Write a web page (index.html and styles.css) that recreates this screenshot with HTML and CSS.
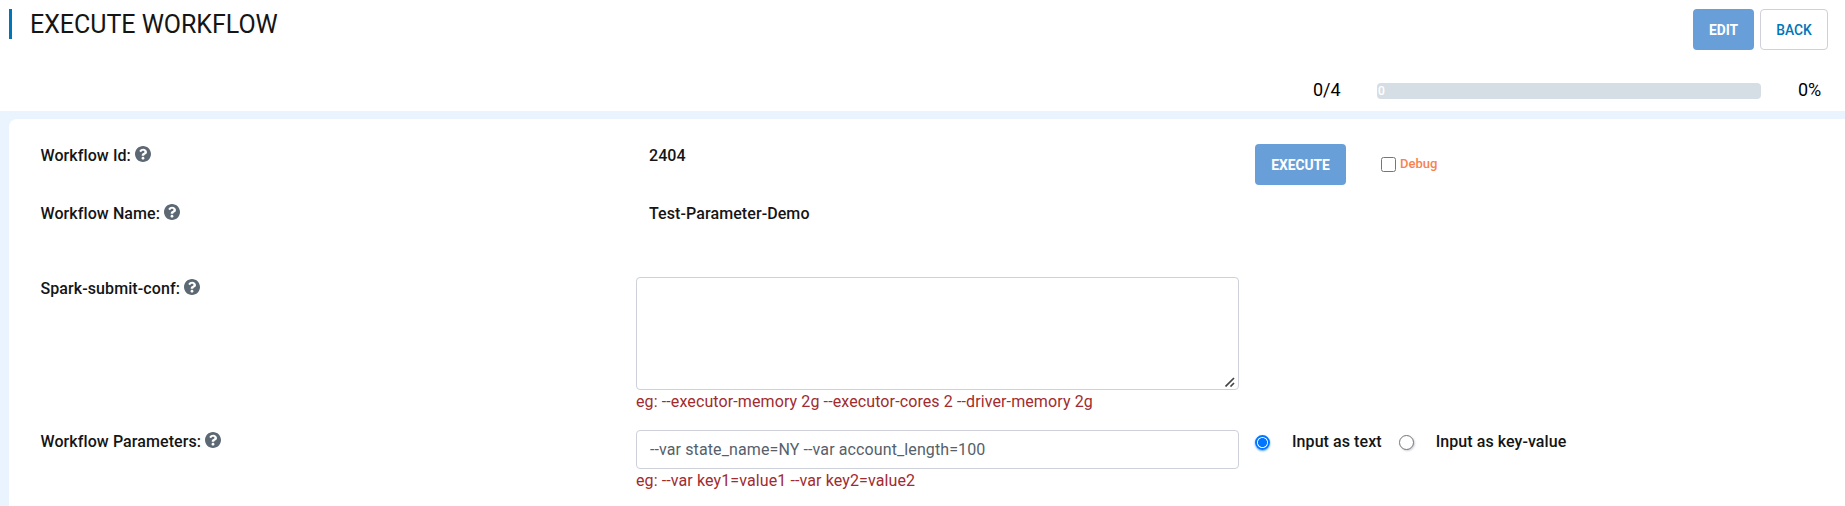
FILE: index.html
```
<!DOCTYPE html>
<html lang="en">
<head>
<meta charset="utf-8">
<title>Execute Workflow</title>
<link rel="stylesheet" href="styles.css">
</head>
<body>
<svg class="sprite" width="0" height="0" aria-hidden="true">
  <symbol id="help" viewBox="8 8 496 496"><path d="M504 256c0 137-111 248-248 248S8 393 8 256 119 8 256 8s248 111 248 248zM262.700 90c-54.500 0-89.300 23-116.500 63.800-3.500 5.300-2.400 12.400 2.700 16.300l34.700 26.300c5.200 3.900 12.600 3 16.700-2.100 17.900-22.700 30.100-35.800 57.300-35.800 20.400 0 45.700 13.100 45.700 33 0 15-12.400 22.700-32.500 34C247.100 238.500 216 254.900 216 296v4c0 6.600 5.400 12 12 12h56c6.600 0 12-5.400 12-12v-1.300c0-28.500 83.200-29.600 83.200-106.700 0-58-60.200-102-116.500-102zM256 338c-25.400 0-46 20.600-46 46s20.600 46 46 46 46-20.600 46-46-20.600-46-46-46z"/></symbol>
</svg>
<header class="header">
  <div class="title-row">
    <h1 class="title">EXECUTE WORKFLOW</h1>
    <div class="actions">
      <button class="btn btn-primary btn-edit">EDIT</button>
      <button class="btn btn-outline">BACK</button>
    </div>
  </div>
  <div class="progress-row">
    <span class="count">0/4</span>
    <div class="progress"><span class="progress-value">0</span></div>
    <span class="percent">0%</span>
  </div>
</header>
<main class="main">
  <form class="card">
    <div class="row row-id">
      <div class="label">Workflow Id: <svg class="help"><use href="#help"/></svg></div>
      <div class="value">2404</div>
      <div class="side">
        <button type="button" class="btn btn-primary btn-execute">EXECUTE</button>
        <label class="debug"><input class="checkbox" type="checkbox">Debug</label>
      </div>
    </div>
    <div class="row row-name">
      <div class="label">Workflow Name: <svg class="help"><use href="#help"/></svg></div>
      <div class="value">Test-Parameter-Demo</div>
    </div>
    <div class="row row-conf">
      <div class="label">Spark-submit-conf: <svg class="help"><use href="#help"/></svg></div>
      <div class="field">
        <textarea class="control area"></textarea>
        <svg class="grip" viewBox="0 0 10 10"><path d="M.5 9.500L9 1M5.500 9.500L9 6"/></svg>
        <div class="hint">eg: --executor-memory 2g --executor-cores 2 --driver-memory 2g</div>
      </div>
    </div>
    <div class="row row-params">
      <div class="label">Workflow Parameters: <svg class="help"><use href="#help"/></svg></div>
      <div class="field">
        <input class="control text" type="text" value="--var state_name=NY --var account_length=100">
        <div class="hint">eg: --var key1=value1 --var key2=value2</div>
      </div>
      <div class="side radios">
        <label class="option"><input class="radio" type="radio" name="mode" checked>Input as text</label>
        <label class="option"><input class="radio" type="radio" name="mode">Input as key-value</label>
      </div>
    </div>
  </form>
</main>
</body>
</html>
```
FILE: styles.css
```
* { box-sizing: border-box; }
body {
  margin: 0;
  height: 506px;
  overflow: hidden;
  display: flex;
  flex-direction: column;
  background: #fff;
  color: #151515;
  font: 400 16px/24px Roboto, sans-serif;
}
.sprite { position: absolute; }
.header { height: 111px; flex: none; padding: 9px 17px 0 9px; }
.title-row { display: flex; justify-content: space-between; align-items: flex-start; height: 69px; }
.title {
  margin: 0;
  height: 30px;
  padding-left: 18px;
  border-left: 3px solid #0076b8;
  font-size: 25px;
  line-height: 32px;
  font-weight: 400;
  letter-spacing: -.03px;
}
.actions { display: flex; gap: 6px; }
.btn {
  height: 41px;
  padding: 0;
  border: 1px solid transparent;
  border-radius: 4px;
  font: 500 13.800px/20px Roboto, sans-serif;
}
.btn-primary { background: #689fd9; color: #fff; font-weight: 700; }
.btn-edit { width: 61px; }
.btn-outline { width: 68px; background: #fff; border-color: #ced0da; color: #0076b8; }
.btn-execute { width: 91px; }
.progress-row { display: flex; align-items: center; height: 24px; font-size: 18px; color: #000; }
.count { margin-left: 1304px; width: 64px; }
.progress {
  width: 384px;
  height: 16px;
  margin-top: 2px;
  border-radius: 4px;
  background: #d6dee5;
  display: flex;
  align-items: center;
}
.progress-value { padding-left: 1px; font-size: 12px; font-weight: 500; line-height: 16px; color: #fff; }
.percent { margin-left: 37px; }
.main { flex: 1; padding: 8px 0 0 9px; background: #e9f4ff; }
.card { height: 100%; padding: 25px 0 0 31.500px; border-radius: 8px 0 0 0; background: #fff; }
.row { display: grid; grid-template-columns: 595.500px 603px 1fr; }
.row-id { height: 58px; }
.row-name { height: 75px; }
.row-conf { height: 153px; }
.label, .value { font-weight: 500; letter-spacing: .09px; }
.value { padding-left: 13px; }
.help { width: 16px; height: 16px; fill: #5c6873; vertical-align: -1px; }
.side { display: flex; align-items: flex-start; padding-left: 16px; }
.debug { display: flex; align-items: center; height: 40px; margin-left: 35px; color: #f8824f; font-size: 13px; font-weight: 500; }
.checkbox { width: 15px; height: 15px; margin: 0 4px 0 0; }
.field { position: relative; }
.control {
  display: block;
  width: 603px;
  border: 1px solid #ced0da;
  border-radius: 4px;
  padding: 6px 13px;
  background: #fff;
  color: #55606b;
  font: 400 16px/24px Roboto, sans-serif;
  letter-spacing: .11px;
  outline: 0;
  resize: none;
}
.area { height: 113px; }
.grip { position: absolute; right: 4px; top: 100px; width: 10px; height: 10px; fill: none; stroke: #444; stroke-width: 1.700; }
.text { height: 39px; }
.hint { color: #a12b2f; letter-spacing: .11px; }
.option { display: flex; align-items: center; height: 24px; font-weight: 500; letter-spacing: .07px; }
.radio {
  appearance: none;
  width: 15px;
  height: 15px;
  margin: 0 22px 0 0;
  border: 1px solid #767676;
  border-radius: 50%;
  background: #fff;
  box-shadow: 1px 1px 2px #ced0da;
}
.radio:checked {
  border: 2px solid #0075ff;
  background: radial-gradient(circle, #0075ff 4.200px, #fff 4.800px);
  box-shadow: 0 1px 2px #55a0ff;
}
.option + .option { margin-left: 17px; }
```
